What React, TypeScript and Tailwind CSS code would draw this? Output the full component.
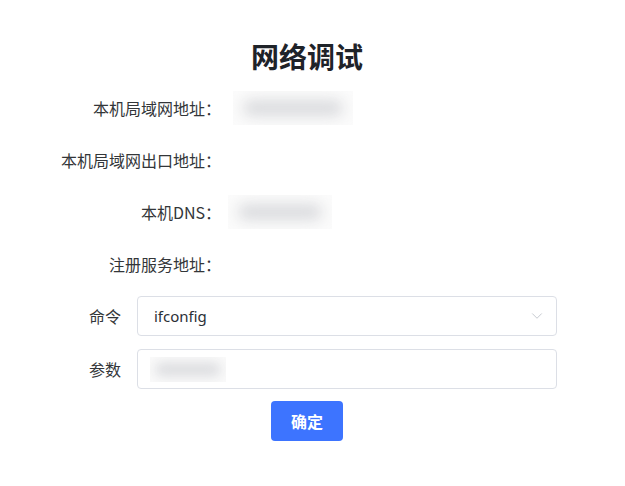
import { ChevronDown } from "lucide-react";

const infoRows = [
  { label: "本机局域网地址：", blur: "w-[120px] ml-[12px]" },
  { label: "本机局域网出口地址：", blur: "" },
  { label: "本机DNS：", blur: "w-[104px] ml-[7px]" },
  { label: "注册服务地址：", blur: "" },
];

function Blurred({ className }: { className: string }) {
  return (
    <div className={`relative h-[34px] overflow-hidden bg-[#fbfbfb] ${className}`}>
      <div className="absolute left-[10px] right-[10px] top-[9px] h-[16px] rounded-full bg-[#dadbde] blur-[7px]" />
    </div>
  );
}

export default function App() {
  return (
    <div
      className="w-[625px] h-[486px] bg-white text-[#333639]"
      style={{ fontFamily: '"Noto Sans CJK SC", "Noto Sans", sans-serif' }}
    >
      <div className="ml-[57px] w-[500px] pt-[38px]">
        <h1 className="text-center text-[28px] leading-[37px] font-bold text-[#1f2329] mb-[7px]">
          网络调试
        </h1>

        <div className="flex flex-col">
          {infoRows.map((row) => (
            <div key={row.label} className="flex h-[52px] items-center">
              <div className="w-[164px] shrink-0 text-right text-[16px]">
                {row.label}
              </div>
              {row.blur && <Blurred className={row.blur} />}
            </div>
          ))}
        </div>

        <div className="mt-[6px] flex flex-col gap-[13px]">
          <div className="flex items-center">
            <label className="w-[80px] shrink-0 pr-[16px] text-right text-[16px]">命令</label>
            <div className="flex h-[40px] flex-1 items-center justify-between rounded-[4px] border border-[#dcdfe6] pl-[16px] pr-[10px]">
              <span className="text-[15px] text-[#2b2f36]" style={{ fontFamily: '"Noto Sans", sans-serif' }}>
                ifconfig
              </span>
              <ChevronDown size={18} strokeWidth={1.2} className="text-[#c0c4cc]" />
            </div>
          </div>
          <div className="flex items-center">
            <label className="w-[80px] shrink-0 pr-[16px] text-right text-[16px]">参数</label>
            <div className="flex h-[40px] flex-1 items-center rounded-[4px] border border-[#dcdfe6] pl-[12px]">
              <div className="relative h-[25px] w-[76px] overflow-hidden bg-[#fafafa]">
                <div className="absolute left-[5px] right-[5px] top-[6px] h-[13px] rounded-full bg-[#dadbde] blur-[6px]" />
              </div>
            </div>
          </div>
        </div>

        <div className="mt-[12px] flex justify-center">
          <button className="h-[40px] w-[72px] rounded-[4px] bg-[#3d74ff] text-[16px] font-bold text-white">
            确定
          </button>
        </div>
      </div>
    </div>
  );
}
